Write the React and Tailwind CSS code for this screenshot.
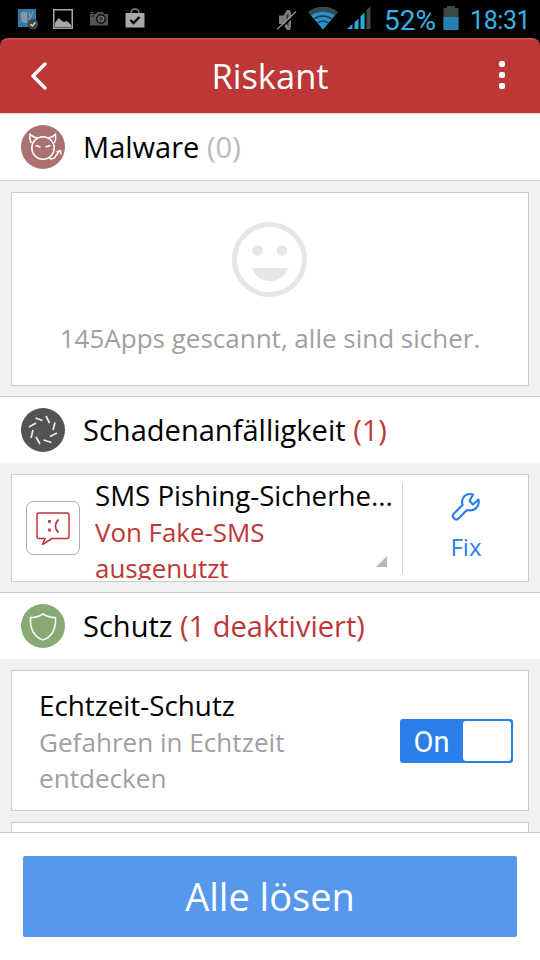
import React from 'react';

const StatusBar = () => (
  <div className="h-[38px] shrink-0 bg-black flex items-center text-[#33b5e5] font-['Roboto']">
    <svg className="ml-[17px]" width="22" height="22" viewBox="0 0 22 22">
      <rect x="1" y="1" width="18" height="18" fill="#2e7aa8" />
      <path d="M4 4h6v11H7l-3-2z" fill="#8b979c" />
      <path d="M12 4l3 4-2 3zM16 3l-2 6M11 10l2 5" stroke="#8b979c" fill="none" />
      <circle cx="16" cy="16" r="5.2" fill="#3c4748" />
      <path d="M13.2 16l2 2 3.3-3.8" stroke="#d0d4d4" strokeWidth="1.3" fill="none" />
    </svg>
    <svg className="ml-[14px]" width="20" height="20" viewBox="0 0 20 20">
      <rect x="0.75" y="0.75" width="18.5" height="18.5" fill="#000" stroke="#a8a8a8" strokeWidth="1.5" />
      <path d="M2 18v-4l2-3 2-2 3 3 2 1 3-1 2 2 2 2v2z" fill="#a8a8a8" />
    </svg>
    <svg className="ml-[17px]" width="18" height="14" viewBox="0 0 18 14">
      <path d="M0 2h6l1-2h6l1 2h4v11.500H0z" fill="#545454" />
      <circle cx="11" cy="7" r="4.300" fill="#3c3c3c" stroke="#111" strokeWidth="1.400" />
      <circle cx="11" cy="7" r="2.800" fill="none" stroke="#8a8a8a" strokeWidth="0.800" />
      <path d="M1.500 4h2.500" stroke="#111" />
      <path d="M0.500 0.700h3" stroke="#777" />
    </svg>
    <svg className="ml-[17px] mb-[2px]" width="20" height="20" viewBox="0 0 20 20">
      <path d="M6 6V4.500a4 3.500 0 0 1 8 0V6" stroke="#858b89" strokeWidth="1.300" fill="none" />
      <path d="M0.500 5h19v14.500h-19z" fill="#a8a8a8" />
      <path d="M5.500 12l3 3 6-6" stroke="#000" strokeWidth="2.400" fill="none" />
    </svg>
    <svg className="ml-[131px] mt-[2px]" width="22" height="22" viewBox="0 0 22 22">
      <path d="M3 6.500h4.500L11 1h3l1 3v13l-1 4h-3l-4-6H3z" fill="#7c7c7c" />
      <path d="M10.500 6v9l2 2.500V4.500z" fill="#333" />
      <path d="M3 21L21 4" stroke="#000" strokeWidth="1.500" />
      <path d="M1.500 20L20 2.500" stroke="#8c8c8c" strokeWidth="1.500" />
    </svg>
    <svg className="ml-[9px] -mt-[3px]" width="32" height="24" viewBox="0 0 32 24">
      <path d="M1 6C9 -1 23 -1 31 6L16 23.500z" fill="#354a50" />
      <path d="M4 9.500C11 4.500 21 4.500 28 9.500L16 23.500z" fill="#2a8fc4" />
      <path d="M7 13C12 9 20 9 25 13M10.500 17C13.500 14.500 18.500 14.500 21.500 17" fill="none" stroke="#123a50" strokeWidth="1.300" />
    </svg>
    <svg className="ml-[8px] -mt-[3px]" width="25" height="23" viewBox="0 0 25 23">
      <path d="M0 23l5.500-5V23zM7.500 16.500l4-4V23h-4zM13.500 10.500l4-4V23h-4z" fill="#29aee2" />
      <path d="M19.500 4L23.500 0.500V23h-4z" fill="#3a4a4b" />
    </svg>
    <span className="ml-[12px] w-[53px] text-[28px] leading-none pt-[3px] whitespace-nowrap">52%</span>
    <svg className="ml-[6px] -mt-[2px]" width="16" height="24" viewBox="0 0 16 24">
      <path d="M4 0h8v2h3.500v22H0.500V2H4z" fill="#3b494a" />
      <path d="M0.500 11h15v13H0.500z" fill="#277fb2" />
    </svg>
    <span className="ml-[11px] text-[25px] leading-none tracking-[-0.4px] pt-[2px] whitespace-nowrap">18:31</span>
  </div>
);

const Header = () => (
  <div className="bg-black shrink-0">
    <div className="h-[75px] bg-[#be3737] border-t-2 border-[#cf4a4a] rounded-t-[8px] flex items-center pb-px pl-[30px] pr-[35px]">
      <svg width="18" height="30" viewBox="0 0 18 30">
        <path d="M15 3L3 15l12 12" fill="none" stroke="#fff" strokeWidth="3.500" strokeLinecap="round" strokeLinejoin="round" />
      </svg>
      <h1 className="flex-1 text-center text-[34.500px] text-white leading-none pr-[7px]">Riskant</h1>
      <div className="flex flex-col gap-[5px] pb-[2px]">
        <span className="size-[6px] rounded-[2px] bg-white" />
        <span className="size-[6px] rounded-[2px] bg-white" />
        <span className="size-[6px] rounded-[2px] bg-white" />
      </div>
    </div>
  </div>
);

const MalwareIcon = () => (
  <svg width="44" height="44" viewBox="0 0 44 44">
    <circle cx="22" cy="22" r="22" fill="#ab7171" />
    <g fill="none" stroke="#fff" strokeWidth="1.500" strokeLinejoin="round">
      <circle cx="22" cy="23" r="11.200" />
      <path d="M10.500 18C8.500 15 8.500 12 9 9c2 3 4.500 3.500 8 4M33.500 18c1.500-3 1.500-6 1-9-2 3-4.500 3.500-8 4" />
      <path d="M14.500 20.500l5 1.500M29.500 20.500l-5 1.500" />
      <path d="M28 33c4 2 6 0 7-2.500l3.500-4.500M35.500 27l4-1.500.5 4" />
    </g>
  </svg>
);

const VulnerabilityIcon = () => (
  <svg width="44" height="44" viewBox="0 0 44 44">
    <circle cx="22" cy="22" r="22" fill="#535353" />
    <path
      d="M14.500 10l7 2.500M25 8l3.500 7M34 14.500l-2 7.500M36 25l-7 3.500M30.500 34.500l-8-2.500M19 36l-4-7M10 30l2-8M8 19l7-4"
      stroke="#eee"
      strokeWidth="1.700"
    />
  </svg>
);

const ProtectionIcon = () => (
  <svg width="44" height="44" viewBox="0 0 44 44">
    <circle cx="22" cy="22" r="22" fill="#88a874" />
    <path
      d="M22 10c-3.500 2.500-8 3.500-12.500 3.500C9 24 12 32.500 22 36c10-3.500 13-12 12.500-22.500C30 13.500 25.500 12.500 22 10z"
      fill="none"
      stroke="#f4f7f2"
      strokeWidth="1.600"
    />
  </svg>
);

const SectionHeader = ({ icon, title, count, countClass }) => (
  <div className="h-[66px] bg-white flex items-center pl-[21px]">
    {icon}
    <h2 className="ml-[18px] text-[29.050px] leading-[30px] text-black whitespace-nowrap">
      {title} <span className={countClass}>{count}</span>
    </h2>
  </div>
);

const App = () => {
  return (
    <div className="w-[540px] h-[960px] overflow-hidden flex flex-col bg-[#f1f1f1] font-['Open_Sans','Noto_Sans',sans-serif]">
      <StatusBar />
      <Header />

      <div className="flex-1 min-h-0 overflow-hidden">
        <div className="border-t border-b border-t-[#e5d5d5] border-b-[#cbcbcb]">
          <SectionHeader icon={<MalwareIcon />} title="Malware" count="(0)" countClass="text-[#bababa]" />
        </div>
        <div className="mx-[11px] mt-[11px] h-[194px] bg-white border border-[#cbcbcb] flex flex-col items-center">
          <svg className="mt-[29px]" width="76" height="76" viewBox="0 0 76 76">
            <circle cx="37.500" cy="37.500" r="35" fill="none" stroke="#e7e5e6" strokeWidth="5" />
            <circle cx="25.500" cy="28.500" r="5.200" fill="#e7e5e6" />
            <circle cx="50" cy="28.500" r="5.200" fill="#e7e5e6" />
            <path d="M19.500 46h37C53 54 47 59 38 59s-15-5-18.500-13z" fill="#e7e5e6" />
          </svg>
          <p className="mt-[26px] text-[26px] leading-[28px] text-[#a0a0a0] whitespace-nowrap">145Apps gescannt, alle sind sicher.</p>
        </div>

        <div className="mt-[10px] border-t border-[#cbcbcb]">
          <SectionHeader icon={<VulnerabilityIcon />} title="Schadenanfälligkeit" count="(1)" countClass="text-[#be3737]" />
        </div>
        <div className="mx-[11px] mt-[11px] h-[108px] bg-white border border-[#cbcbcb] flex items-center">
          <div className="ml-[14px] w-[54px] h-[54px] border border-[#b0b0b0] rounded-[7px] flex items-center justify-center">
            <svg width="34" height="34" viewBox="0 0 34 34" fill="none" stroke="#be3737" strokeWidth="1.500">
              <path d="M3 2h28q2 0 2 2v21.500q0 2-2 2H16l-9.500 6 2.500-6H3q-2 0-2-2V4q0-2 2-2z" strokeLinejoin="round" />
              <path d="M13.500 9v3M13.500 17.500v3" strokeWidth="2.600" />
              <path d="M22.500 8.500c-4 4-4 9 0 13" strokeWidth="1.800" />
            </svg>
          </div>
          <div className="ml-[15px] w-[300px] h-[104px] overflow-hidden">
            <div className="text-[27.700px] leading-[36px] pt-px mb-px text-black whitespace-nowrap">SMS Pishing-Sicherhe...</div>
            <div className="text-[25.900px] leading-[36px] w-[220px] text-[#be3737]">Von Fake-SMS ausgenutzt</div>
          </div>
          <svg className="-ml-[19px] mt-[66px]" width="11" height="11" viewBox="0 0 11 11">
            <path d="M11 0v11H0z" fill="#b8b8b8" />
          </svg>
          <div className="ml-[15px] w-px h-[91px] bg-[#d4d4d8]" />
          <div className="flex-1 flex flex-col items-center pb-[3px] text-[#2b7fe9]">
            <svg width="30" height="30" viewBox="0 0 30 30" fill="none" stroke="currentColor" strokeWidth="2.200" strokeLinejoin="round">
              <path d="M22 2.500C15 .5 9.500 5.500 11.500 13L2.500 22c-2 3 1.500 6.500 4.500 5l9-9c7.500 2 13-3.500 11.500-10.500L22 12.500l-3.500-3.500z" />
            </svg>
            <span className="mt-[10px] pl-px text-[24px] leading-[30px]">Fix</span>
          </div>
        </div>

        <div className="mt-[10px] border-t border-[#cbcbcb]">
          <SectionHeader icon={<ProtectionIcon />} title="Schutz" count="(1 deaktiviert)" countClass="text-[#be3737]" />
        </div>
        <div className="mx-[11px] mt-[11px] h-[141px] bg-white border border-[#cbcbcb] flex items-center pl-[27px] pr-[15px]">
          <div className="flex-1 pt-px">
            <div className="text-[27.800px] leading-[36px] mb-px text-black">Echtzeit-Schutz</div>
            <div className="text-[26.100px] leading-[36px] w-[280px] text-[#a0a0a0]">Gefahren in Echtzeit entdecken</div>
          </div>
          <div className="w-[113px] h-[44px] bg-[#2b7fe9] rounded-[3px] p-[2px] flex">
            <span className="flex-1 text-center pr-[2px] text-[29px] leading-[42px] text-white font-['Roboto']">On</span>
            <span className="w-[48px] bg-white rounded-[3px]" />
          </div>
        </div>
        <div className="mx-[11px] mt-[11px] h-[141px] bg-white border border-[#cbcbcb]" />
      </div>

      <div className="h-[128px] shrink-0 bg-white border-t border-[#cbcbcb] px-[23px] pt-[23px]">
        <button className="w-full h-[81px] pb-px rounded-[2px] bg-[#5598ec] text-white text-[38px] leading-none">Alle lösen</button>
      </div>
    </div>
  );
};

export default App;
